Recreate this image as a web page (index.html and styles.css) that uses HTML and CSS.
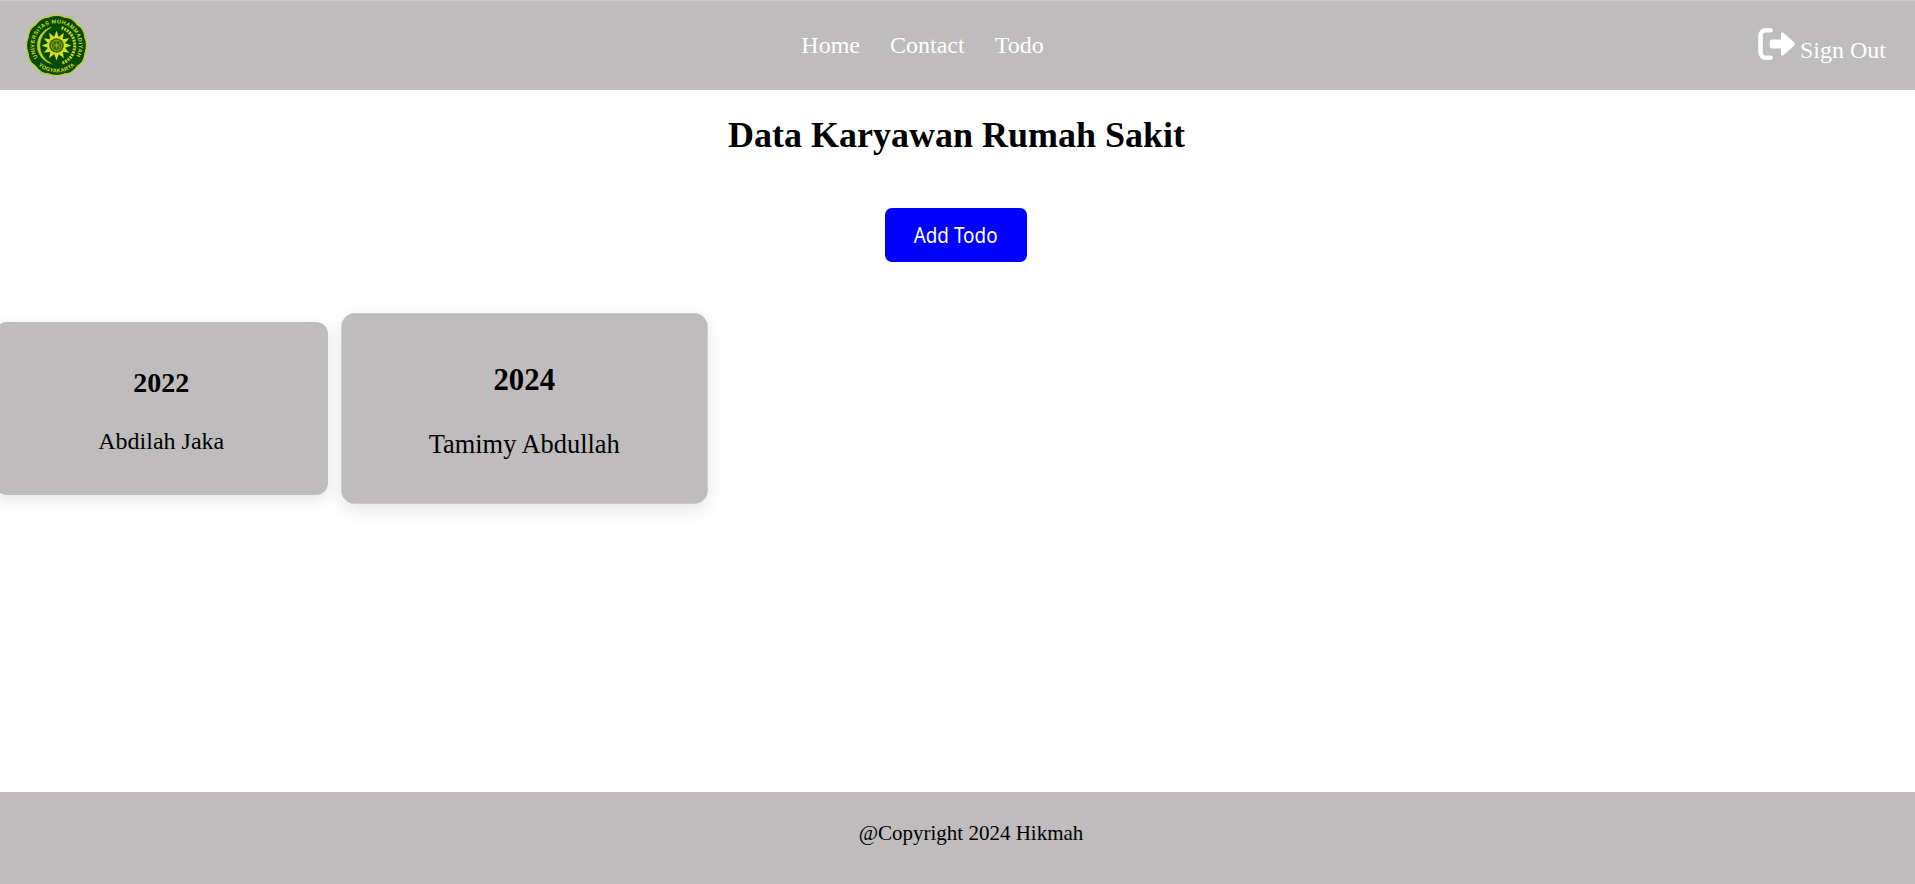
FILE: index.html
```html
<!DOCTYPE html>
<html lang="id">
<head>
<meta charset="utf-8">
<title>Data Karyawan Rumah Sakit</title>
<link rel="stylesheet" href="styles.css">
</head>
<body>
<header class="navbar">
  <svg class="logo" viewBox="-30 -30 60 60" role="img">
    <defs>
      <path id="ring-top" d="M-18.5 12A22 22 0 1 1 18.5 12"/>
      <path id="ring-bottom" d="M-20 17.5A26.6 26.6 0 0 0 20 17.5"/>
      <path id="ray" d="M-2.4 -8L0 -14.5L2.4 -8Z"/>
    </defs>
    <path class="seal" d="M-7.5 -28Q0 -31 7.5 -28Q15.5 -28 20.5 -20.5Q27.5 -16.500 28 -7.500Q31 0 28 7.500Q27.500 16.500 20.500 20.500Q15.500 28 7.500 28Q0 31 -7.500 28Q-15.500 28 -20.500 20.500Q-27.500 16.500 -28 7.500Q-31 0 -28 -7.500Q-27.500 -16.500 -20.500 -20.500Q-15.500 -28 -7.500 -28Z"/>
    <text class="seal-text"><textPath href="#ring-top" textLength="92">UNIVERSITAS MUHAMMADIYAH</textPath></text>
    <text class="seal-text"><textPath href="#ring-bottom" startOffset="3" textLength="39">YOGYAKARTA</textPath></text>
    <path class="wreath" d="M-5 -18A18.6 18.6 0 0 0 -5 18Q-16 12 -16.500 0Q-16 -12 -5 -18Z"/>
    <path class="wreath wreath-dots" d="M5 -17.500A18.300 18.300 0 0 1 5 17.500"/>
    <g class="sun">
      <use href="#ray"/><use href="#ray" transform="rotate(30)"/><use href="#ray" transform="rotate(60)"/>
      <use href="#ray" transform="rotate(90)"/><use href="#ray" transform="rotate(120)"/><use href="#ray" transform="rotate(150)"/>
      <use href="#ray" transform="rotate(180)"/><use href="#ray" transform="rotate(210)"/><use href="#ray" transform="rotate(240)"/>
      <use href="#ray" transform="rotate(270)"/><use href="#ray" transform="rotate(300)"/><use href="#ray" transform="rotate(330)"/>
      <circle r="8.8"/>
    </g>
    <circle class="sun-core" r="7.2"/>
    <circle class="sun-mark" r="5"/>
    <path class="sun-mark" d="M-3.5 -2Q0 2 3.5 -2M-3.5 2Q0 -2 3.5 2M0 -3V3"/>
  </svg>
  <nav class="links"><a>Home</a><a>Contact</a><a>Todo</a></nav>
  <a class="signout">
    <svg class="signout-icon" viewBox="0 0 37 32"><path class="bracket" d="M12.500 2.300H8a5.500 5.500 0 0 0-5.500 5.500v16.400a5.500 5.500 0 0 0 5.500 5.500H12.500"/><path class="arrow" d="M14 11.500H23V6q0-2.500 2.300-1.200L36.300 14.600q1 1.400 0 2.800L25.300 27.200Q23 28.500 23 26v-5.500H14q-2.200 0-2.200-2.200v-4.600q0-2.200 2.200-2.200z"/></svg>
    <span class="signout-label">Sign Out</span>
  </a>
</header>
<main class="content">
  <h1 class="title">Data Karyawan Rumah Sakit</h1>
  <button class="add"><span class="add-label">Add Todo</span></button>
  <section class="cards">
    <article class="card"><h2 class="year">2022</h2><p class="name">Abdilah Jaka</p></article>
    <article class="card card-active"><h2 class="year">2024</h2><p class="name">Tamimy Abdullah</p></article>
  </section>
</main>
<footer class="footer">@Copyright 2024 Hikmah</footer>
</body>
</html>
```
FILE: styles.css
```css
* { box-sizing: border-box; }
body {
  margin: 0;
  height: 884px;
  display: flex;
  flex-direction: column;
  overflow: hidden;
  background: #fff;
  color: #000;
  font-family: "Liberation Serif", serif;
}
.navbar {
  height: 90px;
  flex: none;
  display: flex;
  align-items: center;
  justify-content: space-between;
  padding: 0 29px 0 26px;
  background: #bebcbd;
  border-top: 1px solid #cbc9ca;
  color: #fff;
  font-size: 24px;
}
.logo { width: 61px; height: 61px; }
.seal { fill: #064a08; stroke: #c3cf14; stroke-width: 1.2; }
.seal-text { fill: #d3dc20; font: bold 5.4px "Liberation Sans", sans-serif; }
.wreath { fill: #c6d21a; stroke: #c6d21a; stroke-width: .5; }
.wreath-dots { fill: none; stroke-width: 3; stroke-dasharray: 2 .9; }
.sun { fill: #d8e022; }
.sun-core { fill: #3f6d0e; }
.sun-mark { fill: none; stroke: #a9bd1c; stroke-width: .7; }
.links { display: flex; gap: 30px; }
.signout { display: flex; align-items: center; gap: 5px; }
.signout-icon { width: 37px; height: 32px; margin-bottom: 3px; }
.bracket { fill: none; stroke: #fff; stroke-width: 4.6; stroke-linecap: round; }
.arrow { fill: #fff; }
.signout-label { padding-top: 10px; }
.content {
  flex: 1;
  display: flex;
  flex-direction: column;
  align-items: center;
}
.title { margin: 24px 2px 0 0; font-size: 36px; line-height: 42px; }
.add {
  width: 142px;
  height: 54px;
  margin: 52px 3px 0 0;
  padding: 0;
  border: 0;
  border-radius: 7px;
  background: #00f;
  color: #fff;
  font: 21px/54px "Noto Sans", sans-serif;
}
.add-label { display: inline-block; transform: scaleX(.9); }
.cards { align-self: stretch; display: flex; gap: 30px; margin: 60px 0 0 -5px; }
.card {
  width: 332.5px;
  height: 173px;
  padding: 45px 0 0;
  border-radius: 12px;
  background: #bebcbd;
  box-shadow: 0 5px 15px rgba(0, 0, 0, .1);
  text-align: center;
}
.card-active { transform: scale(1.1); }
.year { margin: 0; font-size: 28px; line-height: 32px; }
.name { margin: 28px 0 0; font-size: 24px; line-height: 28px; }
.footer {
  height: 92px;
  flex: none;
  padding: 28px 0 0 27px;
  background: #bebcbd;
  font-size: 21px;
  line-height: 26px;
  text-align: center;
}
```
